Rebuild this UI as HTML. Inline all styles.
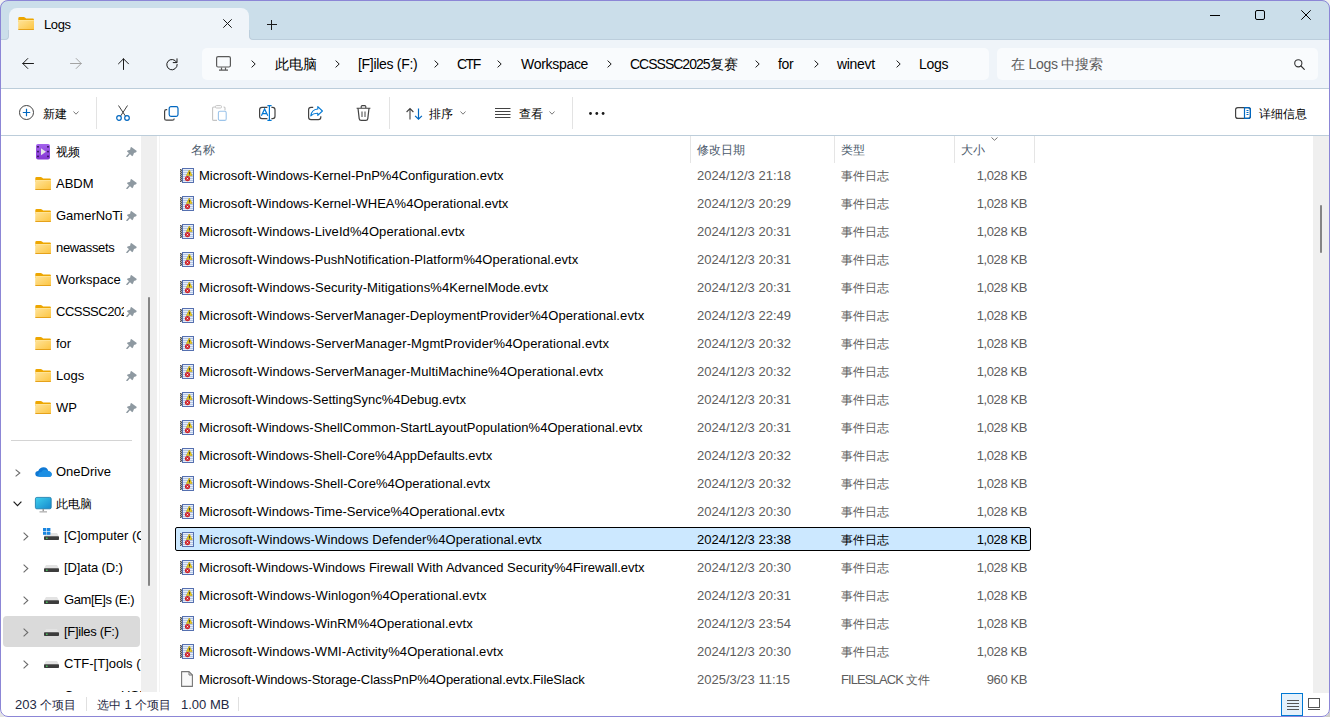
<!DOCTYPE html><html><head><meta charset="utf-8"><style>
*{box-sizing:border-box;margin:0;padding:0}
html,body{width:1330px;height:717px;overflow:hidden;background:#f1f1ef}
body{font-family:"Liberation Sans",sans-serif;font-size:13px;color:#1a1a1a;position:relative}
.a{position:absolute}
.c{font-size:12px}
.ad{font-size:14px;letter-spacing:-0.3px}
.ad .c{font-size:14px;letter-spacing:0}
.t{position:absolute;white-space:nowrap;line-height:16px;padding-top:1px}
.k{color:#000}
.g{color:#5d5d5d}
.h{color:#4b596b}
.sz{letter-spacing:-0.4px}
#win{position:absolute;left:0;top:0;width:1330px;height:717px;border-radius:8px;overflow:hidden;background:#fff}
#frame{position:absolute;left:0;top:0;width:1330px;height:717px;border:1px solid #8c86d6;border-radius:8px}
svg.i{position:absolute;overflow:visible}
</style></head><body>

<svg width="0" height="0" style="position:absolute">
<defs>
 <linearGradient id="fg" x1="0" y1="0" x2="1" y2="1">
  <stop offset="0" stop-color="#ffe49a"/><stop offset="1" stop-color="#fcc440"/>
 </linearGradient>
 <symbol id="folder" viewBox="0 0 16 13">
  <path d="M0.3 1.3 Q0.3 0 1.6 0 H5.6 Q6.5 0 7 0.6 L8.1 1.6 H14.9 Q15.9 1.6 15.9 2.6 V5 H0.3Z" fill="#eda600"/>
  <rect x="0.2" y="3.1" width="15.8" height="9.8" rx="1" fill="url(#fg)"/>
  <rect x="0.2" y="12" width="15.8" height="0.9" rx="0.45" fill="#e6a21a"/>
  <rect x="0.2" y="3.1" width="15.8" height="0.7" fill="#ffe7a0"/>
 </symbol>
 <symbol id="pin" viewBox="0 0 11 11">
  <path d="M5.3 0.9 L10.8 5.1 L10.1 6.2 L8 6.9 L7 9.5 L6.2 10.2 L0.9 5.3 L1.6 4.5 L4.1 3.7 L4.6 1.6Z" fill="#8e99a1"/>
  <path d="M3.8 7.3 L1 10.4" stroke="#8e99a1" stroke-width="1.5" stroke-linecap="round"/>
 </symbol>
 <symbol id="evt" viewBox="0 0 14 15">
  <rect x="2" y="0" width="12" height="15" fill="#5570b0"/>
  <rect x="3" y="1" width="10" height="13" fill="#e8eef8"/>
  <g fill="#b3c6e4"><rect x="3" y="2" width="10" height="1"/><rect x="3" y="4" width="10" height="1"/><rect x="3" y="6" width="10" height="1"/><rect x="3" y="8" width="10" height="1"/><rect x="3" y="10" width="10" height="1"/><rect x="3" y="12" width="10" height="1"/></g>
  <g fill="#555"><rect x="0" y="1" width="1" height="1"/><rect x="1" y="2" width="1" height="1"/><rect x="0" y="3" width="1" height="1"/><rect x="1" y="4" width="1" height="1"/><rect x="0" y="5" width="1" height="1"/><rect x="1" y="6" width="1" height="1"/><rect x="0" y="7" width="1" height="1"/><rect x="1" y="8" width="1" height="1"/><rect x="0" y="9" width="1" height="1"/><rect x="1" y="10" width="1" height="1"/><rect x="0" y="11" width="1" height="1"/><rect x="1" y="12" width="1" height="1"/><rect x="0" y="13" width="1" height="1"/></g>
  <g fill="#aaa"><rect x="1" y="1" width="1" height="1"/><rect x="0" y="2" width="1" height="1"/><rect x="1" y="3" width="1" height="1"/><rect x="0" y="4" width="1" height="1"/><rect x="1" y="5" width="1" height="1"/><rect x="0" y="6" width="1" height="1"/><rect x="1" y="7" width="1" height="1"/><rect x="0" y="8" width="1" height="1"/><rect x="1" y="9" width="1" height="1"/><rect x="0" y="10" width="1" height="1"/><rect x="1" y="11" width="1" height="1"/><rect x="0" y="12" width="1" height="1"/><rect x="1" y="13" width="1" height="1"/></g>
  <path d="M9.3 2 L12.2 7.6 H6.4Z" fill="#f0cf1a" stroke="#b89a00" stroke-width="0.6" stroke-linejoin="round"/>
  <rect x="8.9" y="3.8" width="0.9" height="2.2" fill="#222"/><rect x="8.9" y="6.4" width="0.9" height="0.8" fill="#222"/>
  <circle cx="7.5" cy="10.6" r="2.6" fill="#cc2229"/>
  <path d="M6.7 9.8 L8.3 11.4 M8.3 9.8 L6.7 11.4" stroke="#fff" stroke-width="0.8"/>
 </symbol>
 <symbol id="doc" viewBox="0 0 12 16">
  <path d="M0.6 0.6 H8 L11.4 4 V15.4 H0.6Z" fill="#f9f9f9" stroke="#777" stroke-width="1.1" stroke-linejoin="round"/>
  <path d="M8 0.6 V4 H11.4" fill="none" stroke="#777" stroke-width="1"/>
 </symbol>
 <symbol id="drive" viewBox="0 0 15 7">
  <path d="M2 0 H13 L15 3.5 H0Z" fill="#e3e3e3"/>
  <rect x="0" y="3.3" width="15" height="3.7" rx="0.8" fill="#3c3c3c"/>
  <rect x="2" y="4.6" width="1.6" height="1.2" fill="#4cd964"/>
 </symbol>
</defs></svg>

<div class="a" style="left:1318px;top:705px;width:12px;height:12px;background:#cfcfcb"></div>
<div class="a" style="left:0;top:705px;width:12px;height:12px;background:#e4e4e2"></div>
<div id="win">
<div class="a" style="left:0;top:0;width:1330px;height:40px;background:#cbdeea"></div>
<div class="a" style="left:9px;top:8px;width:240px;height:32px;background:#eff4f9;border-radius:8px 8px 0 0"></div>
<div class="a" style="left:0;top:40px;width:1330px;height:48px;background:#eff4f9"></div>
<div class="a" style="left:0;top:88px;width:1330px;height:1px;background:#bccdda"></div>
<div class="a" style="left:0;top:135px;width:1330px;height:1px;background:#bccdda"></div>
<div class="a" style="left:202px;top:48px;width:787px;height:32px;background:#f9fbfd;border-radius:5px"></div>
<div class="a" style="left:997px;top:48px;width:321px;height:32px;background:#f9fbfd;border-radius:5px"></div>
<svg class="i" style="left:18px;top:17px" width="16" height="13"><use href="#folder"/></svg>
<div class="t k" style="left:44px;top:16px;letter-spacing:-0.4px">Logs</div>
<div class="t k ad" style="left:275px;top:55px"><span class="c">此电脑</span></div>
<div class="t k ad" style="left:358px;top:55px">[F]iles (F:)</div>
<div class="t k ad" style="left:457px;top:55px"><span style="letter-spacing:-1.5px">CTF</span></div>
<div class="t k ad" style="left:521px;top:55px">Workspace</div>
<div class="t k ad" style="left:630px;top:55px"><span style="letter-spacing:-1px">CCSSSC2025</span><span class="c">复赛</span></div>
<div class="t k ad" style="left:778px;top:55px">for</div>
<div class="t k ad" style="left:837px;top:55px">winevt</div>
<div class="t k ad" style="left:919px;top:55px">Logs</div>
<div class="t g ad" style="left:1011px;top:55px"><span class="c">在</span> Logs <span class="c">中搜索</span></div>
<div class="t k" style="left:43px;top:105px"><span class="c">新建</span></div>
<div class="t k" style="left:429px;top:105px"><span class="c">排序</span></div>
<div class="t k" style="left:519px;top:105px"><span class="c">查看</span></div>
<div class="t k" style="left:1259px;top:105px"><span class="c">详细信息</span></div>
<div class="t k" style="left:56px;top:143px;width:68px;overflow:hidden"><span class="c">视频</span></div>
<svg class="i" style="left:126px;top:146px" width="11" height="11"><use href="#pin"/></svg>
<svg class="i" style="left:35px;top:177px" width="16" height="13"><use href="#folder"/></svg>
<div class="t k" style="left:56px;top:175px;width:68px;overflow:hidden">ABDM</div>
<svg class="i" style="left:126px;top:178px" width="11" height="11"><use href="#pin"/></svg>
<svg class="i" style="left:35px;top:209px" width="16" height="13"><use href="#folder"/></svg>
<div class="t k" style="left:56px;top:207px;width:68px;overflow:hidden">GamerNoTi</div>
<svg class="i" style="left:126px;top:210px" width="11" height="11"><use href="#pin"/></svg>
<svg class="i" style="left:35px;top:241px" width="16" height="13"><use href="#folder"/></svg>
<div class="t k" style="left:56px;top:239px;width:68px;overflow:hidden"><span style="letter-spacing:-0.33px">newassets</span></div>
<svg class="i" style="left:126px;top:242px" width="11" height="11"><use href="#pin"/></svg>
<svg class="i" style="left:35px;top:273px" width="16" height="13"><use href="#folder"/></svg>
<div class="t k" style="left:56px;top:271px;width:68px;overflow:hidden">Workspace</div>
<svg class="i" style="left:126px;top:274px" width="11" height="11"><use href="#pin"/></svg>
<svg class="i" style="left:35px;top:305px" width="16" height="13"><use href="#folder"/></svg>
<div class="t k" style="left:56px;top:303px;width:68px;overflow:hidden"><span style="letter-spacing:-0.5px">CCSSSC2025</span></div>
<svg class="i" style="left:126px;top:306px" width="11" height="11"><use href="#pin"/></svg>
<svg class="i" style="left:35px;top:337px" width="16" height="13"><use href="#folder"/></svg>
<div class="t k" style="left:56px;top:335px;width:68px;overflow:hidden">for</div>
<svg class="i" style="left:126px;top:338px" width="11" height="11"><use href="#pin"/></svg>
<svg class="i" style="left:35px;top:369px" width="16" height="13"><use href="#folder"/></svg>
<div class="t k" style="left:56px;top:367px;width:68px;overflow:hidden">Logs</div>
<svg class="i" style="left:126px;top:370px" width="11" height="11"><use href="#pin"/></svg>
<svg class="i" style="left:35px;top:401px" width="16" height="13"><use href="#folder"/></svg>
<div class="t k" style="left:56px;top:399px;width:68px;overflow:hidden">WP</div>
<svg class="i" style="left:126px;top:402px" width="11" height="11"><use href="#pin"/></svg>
<div class="a" style="left:11px;top:440px;width:121px;height:1px;background:#d4d4d4"></div>
<div class="a" style="left:3px;top:616px;width:137px;height:31px;background:#dadada;border-radius:4px"></div>
<div class="t k" style="left:56px;top:463px">OneDrive</div>
<div class="t k" style="left:56px;top:495px"><span class="c">此电脑</span></div>
<svg class="i" style="left:44px;top:533px" width="15" height="7"><use href="#drive"/></svg>
<div class="t k" style="left:64px;top:527px;width:77px;overflow:hidden">[C]omputer (C:)</div>
<svg class="i" style="left:44px;top:565px" width="15" height="7"><use href="#drive"/></svg>
<div class="t k" style="left:64px;top:559px;width:77px;overflow:hidden"><span style="letter-spacing:-0.1px">[D]ata (D:)</span></div>
<svg class="i" style="left:44px;top:597px" width="15" height="7"><use href="#drive"/></svg>
<div class="t k" style="left:64px;top:591px;width:77px;overflow:hidden"><span style="letter-spacing:-0.42px">Gam[E]s (E:)</span></div>
<svg class="i" style="left:44px;top:629px" width="15" height="7"><use href="#drive"/></svg>
<div class="t k" style="left:64px;top:623px;width:77px;overflow:hidden"><span style="letter-spacing:-0.32px">[F]iles (F:)</span></div>
<svg class="i" style="left:44px;top:661px" width="15" height="7"><use href="#drive"/></svg>
<div class="t k" style="left:64px;top:655px;width:77px;overflow:hidden">CTF-[T]ools (T:)</div>
<svg class="i" style="left:44px;top:693px" width="15" height="7"><use href="#drive"/></svg>
<div class="t k" style="left:64px;top:687px;width:77px;overflow:hidden">Conseror USB (G:)</div>
<div class="a" style="left:141px;top:136px;width:16px;height:556px;background:#efefef"></div>
<div class="a" style="left:148px;top:297px;width:2px;height:289px;background:#858585;border-radius:1px"></div>
<div class="t h" style="left:191px;top:141px"><span class="c">名称</span></div>
<div class="t h" style="left:697px;top:141px"><span class="c">修改日期</span></div>
<div class="t h" style="left:841px;top:141px"><span class="c">类型</span></div>
<div class="t h" style="left:961px;top:141px"><span class="c">大小</span></div>
<div class="a" style="left:690px;top:136px;width:1px;height:27px;background:#e5e5e5"></div>
<div class="a" style="left:834px;top:136px;width:1px;height:27px;background:#e5e5e5"></div>
<div class="a" style="left:954px;top:136px;width:1px;height:27px;background:#e5e5e5"></div>
<div class="a" style="left:1034px;top:136px;width:1px;height:27px;background:#e5e5e5"></div>
<div class="a" style="left:175px;top:527px;width:856px;height:24px;background:#cce8ff;border:1px solid #000;border-radius:2px"></div>
<svg class="i" style="left:180px;top:168px" width="14" height="15"><use href="#evt"/></svg>
<div class="t k" style="left:199px;top:167px;letter-spacing:0.009px">Microsoft-Windows-Kernel-PnP%4Configuration.evtx</div>
<div class="t g" style="left:697px;top:167px">2024/12/3 21:18</div>
<div class="t g" style="left:841px;top:167px"><span class="c">事件日志</span></div>
<div class="t sz g" style="right:303px;top:167px">1,028 KB</div>
<svg class="i" style="left:180px;top:196px" width="14" height="15"><use href="#evt"/></svg>
<div class="t k" style="left:199px;top:195px;letter-spacing:0.018px">Microsoft-Windows-Kernel-WHEA%4Operational.evtx</div>
<div class="t g" style="left:697px;top:195px">2024/12/3 20:29</div>
<div class="t g" style="left:841px;top:195px"><span class="c">事件日志</span></div>
<div class="t sz g" style="right:303px;top:195px">1,028 KB</div>
<svg class="i" style="left:180px;top:224px" width="14" height="15"><use href="#evt"/></svg>
<div class="t k" style="left:199px;top:223px;letter-spacing:0.088px">Microsoft-Windows-LiveId%4Operational.evtx</div>
<div class="t g" style="left:697px;top:223px">2024/12/3 20:31</div>
<div class="t g" style="left:841px;top:223px"><span class="c">事件日志</span></div>
<div class="t sz g" style="right:303px;top:223px">1,028 KB</div>
<svg class="i" style="left:180px;top:252px" width="14" height="15"><use href="#evt"/></svg>
<div class="t k" style="left:199px;top:251px;letter-spacing:0.084px">Microsoft-Windows-PushNotification-Platform%4Operational.evtx</div>
<div class="t g" style="left:697px;top:251px">2024/12/3 20:31</div>
<div class="t g" style="left:841px;top:251px"><span class="c">事件日志</span></div>
<div class="t sz g" style="right:303px;top:251px">1,028 KB</div>
<svg class="i" style="left:180px;top:280px" width="14" height="15"><use href="#evt"/></svg>
<div class="t k" style="left:199px;top:279px;letter-spacing:0.098px">Microsoft-Windows-Security-Mitigations%4KernelMode.evtx</div>
<div class="t g" style="left:697px;top:279px">2024/12/3 20:31</div>
<div class="t g" style="left:841px;top:279px"><span class="c">事件日志</span></div>
<div class="t sz g" style="right:303px;top:279px">1,028 KB</div>
<svg class="i" style="left:180px;top:308px" width="14" height="15"><use href="#evt"/></svg>
<div class="t k" style="left:199px;top:307px;letter-spacing:0.088px">Microsoft-Windows-ServerManager-DeploymentProvider%4Operational.evtx</div>
<div class="t g" style="left:697px;top:307px">2024/12/3 22:49</div>
<div class="t g" style="left:841px;top:307px"><span class="c">事件日志</span></div>
<div class="t sz g" style="right:303px;top:307px">1,028 KB</div>
<svg class="i" style="left:180px;top:336px" width="14" height="15"><use href="#evt"/></svg>
<div class="t k" style="left:199px;top:335px;letter-spacing:0.126px">Microsoft-Windows-ServerManager-MgmtProvider%4Operational.evtx</div>
<div class="t g" style="left:697px;top:335px">2024/12/3 20:32</div>
<div class="t g" style="left:841px;top:335px"><span class="c">事件日志</span></div>
<div class="t sz g" style="right:303px;top:335px">1,028 KB</div>
<svg class="i" style="left:180px;top:364px" width="14" height="15"><use href="#evt"/></svg>
<div class="t k" style="left:199px;top:363px;letter-spacing:0.102px">Microsoft-Windows-ServerManager-MultiMachine%4Operational.evtx</div>
<div class="t g" style="left:697px;top:363px">2024/12/3 20:32</div>
<div class="t g" style="left:841px;top:363px"><span class="c">事件日志</span></div>
<div class="t sz g" style="right:303px;top:363px">1,028 KB</div>
<svg class="i" style="left:180px;top:392px" width="14" height="15"><use href="#evt"/></svg>
<div class="t k" style="left:199px;top:391px;letter-spacing:-0.029px">Microsoft-Windows-SettingSync%4Debug.evtx</div>
<div class="t g" style="left:697px;top:391px">2024/12/3 20:31</div>
<div class="t g" style="left:841px;top:391px"><span class="c">事件日志</span></div>
<div class="t sz g" style="right:303px;top:391px">1,028 KB</div>
<svg class="i" style="left:180px;top:420px" width="14" height="15"><use href="#evt"/></svg>
<div class="t k" style="left:199px;top:419px;letter-spacing:0.031px">Microsoft-Windows-ShellCommon-StartLayoutPopulation%4Operational.evtx</div>
<div class="t g" style="left:697px;top:419px">2024/12/3 20:31</div>
<div class="t g" style="left:841px;top:419px"><span class="c">事件日志</span></div>
<div class="t sz g" style="right:303px;top:419px">1,028 KB</div>
<svg class="i" style="left:180px;top:448px" width="14" height="15"><use href="#evt"/></svg>
<div class="t k" style="left:199px;top:447px;letter-spacing:0.013px">Microsoft-Windows-Shell-Core%4AppDefaults.evtx</div>
<div class="t g" style="left:697px;top:447px">2024/12/3 20:32</div>
<div class="t g" style="left:841px;top:447px"><span class="c">事件日志</span></div>
<div class="t sz g" style="right:303px;top:447px">1,028 KB</div>
<svg class="i" style="left:180px;top:476px" width="14" height="15"><use href="#evt"/></svg>
<div class="t k" style="left:199px;top:475px;letter-spacing:0.051px">Microsoft-Windows-Shell-Core%4Operational.evtx</div>
<div class="t g" style="left:697px;top:475px">2024/12/3 20:32</div>
<div class="t g" style="left:841px;top:475px"><span class="c">事件日志</span></div>
<div class="t sz g" style="right:303px;top:475px">1,028 KB</div>
<svg class="i" style="left:180px;top:504px" width="14" height="15"><use href="#evt"/></svg>
<div class="t k" style="left:199px;top:503px;letter-spacing:0.043px">Microsoft-Windows-Time-Service%4Operational.evtx</div>
<div class="t g" style="left:697px;top:503px">2024/12/3 20:30</div>
<div class="t g" style="left:841px;top:503px"><span class="c">事件日志</span></div>
<div class="t sz g" style="right:303px;top:503px">1,028 KB</div>
<svg class="i" style="left:180px;top:532px" width="14" height="15"><use href="#evt"/></svg>
<div class="t k" style="left:199px;top:531px;letter-spacing:0.106px">Microsoft-Windows-Windows Defender%4Operational.evtx</div>
<div class="t k" style="left:697px;top:531px">2024/12/3 23:38</div>
<div class="t k" style="left:841px;top:531px"><span class="c">事件日志</span></div>
<div class="t sz k" style="right:303px;top:531px">1,028 KB</div>
<svg class="i" style="left:180px;top:560px" width="14" height="15"><use href="#evt"/></svg>
<div class="t k" style="left:199px;top:559px;letter-spacing:-0.022px">Microsoft-Windows-Windows Firewall With Advanced Security%4Firewall.evtx</div>
<div class="t g" style="left:697px;top:559px">2024/12/3 20:30</div>
<div class="t g" style="left:841px;top:559px"><span class="c">事件日志</span></div>
<div class="t sz g" style="right:303px;top:559px">1,028 KB</div>
<svg class="i" style="left:180px;top:588px" width="14" height="15"><use href="#evt"/></svg>
<div class="t k" style="left:199px;top:587px;letter-spacing:0.131px">Microsoft-Windows-Winlogon%4Operational.evtx</div>
<div class="t g" style="left:697px;top:587px">2024/12/3 20:31</div>
<div class="t g" style="left:841px;top:587px"><span class="c">事件日志</span></div>
<div class="t sz g" style="right:303px;top:587px">1,028 KB</div>
<svg class="i" style="left:180px;top:616px" width="14" height="15"><use href="#evt"/></svg>
<div class="t k" style="left:199px;top:615px;letter-spacing:0.088px">Microsoft-Windows-WinRM%4Operational.evtx</div>
<div class="t g" style="left:697px;top:615px">2024/12/3 23:54</div>
<div class="t g" style="left:841px;top:615px"><span class="c">事件日志</span></div>
<div class="t sz g" style="right:303px;top:615px">1,028 KB</div>
<svg class="i" style="left:180px;top:644px" width="14" height="15"><use href="#evt"/></svg>
<div class="t k" style="left:199px;top:643px;letter-spacing:0.094px">Microsoft-Windows-WMI-Activity%4Operational.evtx</div>
<div class="t g" style="left:697px;top:643px">2024/12/3 20:30</div>
<div class="t g" style="left:841px;top:643px"><span class="c">事件日志</span></div>
<div class="t sz g" style="right:303px;top:643px">1,028 KB</div>
<svg class="i" style="left:181px;top:671px" width="12" height="16"><use href="#doc"/></svg>
<div class="t k" style="left:199px;top:671px;letter-spacing:-0.083px">Microsoft-Windows-Storage-ClassPnP%4Operational.evtx.FileSlack</div>
<div class="t g" style="left:697px;top:671px">2025/3/23 11:15</div>
<div class="t g" style="left:841px;top:671px"><span style="letter-spacing:-0.9px">FILESLACK </span><span class="c">文件</span></div>
<div class="t g sz" style="right:303px;top:671px">960 KB</div>
<div class="a" style="left:1313px;top:136px;width:16px;height:557px;background:#efefef"></div>
<div class="a" style="left:159px;top:136px;width:1px;height:556px;background:#f4f4f4"></div>
<div class="a" style="left:1320px;top:205px;width:2px;height:48px;background:#858585;border-radius:1px"></div>
<div class="a" style="left:257px;top:39px;width:1073px;height:1px;background:#bccedc"></div>
<div class="a" style="left:1px;top:32px;width:8px;height:8px;background:#eff4f9"></div>
<div class="a" style="left:0px;top:30px;width:9px;height:10px;background:#cbdeea;border-radius:0 0 4px 0;border-right:1px solid #bccedc;border-bottom:1px solid #bccedc"></div>
<div class="a" style="left:249px;top:32px;width:8px;height:8px;background:#eff4f9"></div>
<div class="a" style="left:249px;top:30px;width:9px;height:10px;background:#cbdeea;border-radius:0 0 0 4px;border-left:1px solid #bccedc;border-bottom:1px solid #bccedc"></div>
<svg class="i" style="left:223px;top:19px" width="9" height="9" viewBox="0 0 9 9" ><path d="M0.3 0.3 L8.7 8.7 M8.7 0.3 L0.3 8.7" stroke="#1a1a1a" stroke-width="1"/></svg>
<svg class="i" style="left:267px;top:20px" width="10" height="10" viewBox="0 0 10 10" ><path d="M4.5 0 V10 M0 4.5 H10" stroke="#1a1a1a" stroke-width="1"/></svg>
<svg class="i" style="left:1210px;top:15px" width="10" height="1" viewBox="0 0 10 1" ><rect x="0" y="0" width="10" height="1" fill="#000"/></svg>
<svg class="i" style="left:1255px;top:10px" width="10" height="10" viewBox="0 0 10 10" ><rect x="0.5" y="0.5" width="9" height="9" rx="1.5" fill="none" stroke="#000" stroke-width="1"/></svg>
<svg class="i" style="left:1301px;top:10px" width="10" height="10" viewBox="0 0 10 10" ><path d="M0.3 0.3 L9.7 9.7 M9.7 0.3 L0.3 9.7" stroke="#000" stroke-width="1"/></svg>
<svg class="i" style="left:22px;top:57px" width="12" height="12" viewBox="0 0 12 12" ><path d="M11.5 6.5 H0.8 M5.8 1.5 L0.8 6.5 L5.8 11.5" fill="none" stroke="#1a1a1a" stroke-width="1" stroke-linecap="round" stroke-linejoin="round"/></svg>
<svg class="i" style="left:70px;top:57px" width="12" height="12" viewBox="0 0 12 12" ><path d="M0.5 6.5 H11.2 M6.2 1.5 L11.2 6.5 L6.2 11.5" fill="none" stroke="#a3a3a3" stroke-width="1" stroke-linecap="round" stroke-linejoin="round"/></svg>
<svg class="i" style="left:117px;top:58px" width="12" height="12" viewBox="0 0 12 12" ><path d="M6.5 11.5 V0.8 M1.5 5.8 L6.5 0.8 L11.5 5.8" fill="none" stroke="#1a1a1a" stroke-width="1" stroke-linecap="round" stroke-linejoin="round"/></svg>
<svg class="i" style="left:166px;top:58px" width="12" height="12" viewBox="0 0 12 12" ><path d="M10.6 4.2 A5.2 5.2 0 1 0 11.2 6.5" fill="none" stroke="#1a1a1a" stroke-width="1" stroke-linecap="round" stroke-linejoin="round"/><path d="M11 0.8 V4.6 H7.2" fill="none" stroke="#1a1a1a" stroke-width="1" stroke-linecap="round" stroke-linejoin="round"/></svg>
<svg class="i" style="left:216px;top:56px" width="15" height="15" viewBox="0 0 15 15" ><rect x="0.6" y="0.6" width="13.8" height="10.4" rx="1.5" fill="none" stroke="#5a5a5a" stroke-width="1.2"/><path d="M3 14.2 H12 M5.5 11.5 V14 M9.5 11.5 V14" stroke="#5a5a5a" stroke-width="1.2"/></svg>
<svg class="i" style="left:251px;top:60px" width="5" height="8" viewBox="0 0 5 8" ><path d="M0.6 0.6 L4.2 4 L0.6 7.4" fill="none" stroke="#1a1a1a" stroke-width="1"/></svg>
<svg class="i" style="left:335px;top:60px" width="5" height="8" viewBox="0 0 5 8" ><path d="M0.6 0.6 L4.2 4 L0.6 7.4" fill="none" stroke="#1a1a1a" stroke-width="1"/></svg>
<svg class="i" style="left:434px;top:60px" width="5" height="8" viewBox="0 0 5 8" ><path d="M0.6 0.6 L4.2 4 L0.6 7.4" fill="none" stroke="#1a1a1a" stroke-width="1"/></svg>
<svg class="i" style="left:497px;top:60px" width="5" height="8" viewBox="0 0 5 8" ><path d="M0.6 0.6 L4.2 4 L0.6 7.4" fill="none" stroke="#1a1a1a" stroke-width="1"/></svg>
<svg class="i" style="left:607px;top:60px" width="5" height="8" viewBox="0 0 5 8" ><path d="M0.6 0.6 L4.2 4 L0.6 7.4" fill="none" stroke="#1a1a1a" stroke-width="1"/></svg>
<svg class="i" style="left:755px;top:60px" width="5" height="8" viewBox="0 0 5 8" ><path d="M0.6 0.6 L4.2 4 L0.6 7.4" fill="none" stroke="#1a1a1a" stroke-width="1"/></svg>
<svg class="i" style="left:814px;top:60px" width="5" height="8" viewBox="0 0 5 8" ><path d="M0.6 0.6 L4.2 4 L0.6 7.4" fill="none" stroke="#1a1a1a" stroke-width="1"/></svg>
<svg class="i" style="left:896px;top:60px" width="5" height="8" viewBox="0 0 5 8" ><path d="M0.6 0.6 L4.2 4 L0.6 7.4" fill="none" stroke="#1a1a1a" stroke-width="1"/></svg>
<svg class="i" style="left:1294px;top:59px" width="11" height="11" viewBox="0 0 11 11" ><circle cx="4.3" cy="4.3" r="3.6" fill="none" stroke="#333" stroke-width="1.1"/><path d="M7 7 L10.3 10.3" stroke="#333" stroke-width="1.2" stroke-linecap="round"/></svg>
<svg class="i" style="left:19px;top:105px" width="15" height="15" viewBox="0 0 15 15" ><circle cx="7.5" cy="7.5" r="7" fill="none" stroke="#424242" stroke-width="1"/><path d="M7.5 3.8 V11.2 M3.8 7.5 H11.2" stroke="#0067c0" stroke-width="1.2"/></svg>
<svg class="i" style="left:73px;top:111px" width="6" height="4" viewBox="0 0 6 4" ><path d="M0.5 0.5 L3 3.2 L5.5 0.5" fill="none" stroke="#7a7a7a" stroke-width="1"/></svg>
<svg class="i" style="left:460px;top:111px" width="6" height="4" viewBox="0 0 6 4" ><path d="M0.5 0.5 L3 3.2 L5.5 0.5" fill="none" stroke="#7a7a7a" stroke-width="1"/></svg>
<svg class="i" style="left:549px;top:111px" width="6" height="4" viewBox="0 0 6 4" ><path d="M0.5 0.5 L3 3.2 L5.5 0.5" fill="none" stroke="#7a7a7a" stroke-width="1"/></svg>
<div class="a" style="left:96px;top:97px;width:1px;height:32px;background:#e3e3e3"></div>
<div class="a" style="left:389px;top:97px;width:1px;height:32px;background:#e3e3e3"></div>
<div class="a" style="left:572px;top:97px;width:1px;height:32px;background:#e3e3e3"></div>
<svg class="i" style="left:116px;top:105px" width="14" height="16" viewBox="0 0 14 16" ><path d="M2.5 0.5 L9.5 11.2 M11.5 0.5 L4.5 11.2" stroke="#424242" stroke-width="1"/><circle cx="3" cy="13" r="2.3" fill="none" stroke="#0067c0" stroke-width="1.2"/><circle cx="11" cy="13" r="2.3" fill="none" stroke="#0067c0" stroke-width="1.2"/></svg>
<svg class="i" style="left:164px;top:105.5px" width="15" height="15" viewBox="0 0 15 15" ><rect x="5.2" y="0.6" width="8.8" height="9.8" rx="1.8" fill="none" stroke="#0067c0" stroke-width="1.2"/><path d="M3.2 3.6 H2.4 Q0.6 3.6 0.6 5.4 V12.4 Q0.6 14.2 2.4 14.2 H8.4 Q10.2 14.2 10.2 12.4" fill="none" stroke="#424242" stroke-width="1.2"/></svg>
<svg class="i" style="left:212px;top:105px" width="15" height="16" viewBox="0 0 15 16" ><path d="M3.5 2 H1.8 Q0.6 2 0.6 3.2 V14.4 Q0.6 15.4 1.8 15.4 H5" fill="none" stroke="#c4c4c4" stroke-width="1.1"/><rect x="3.5" y="0.6" width="6" height="2.4" rx="1" fill="none" stroke="#c4c4c4" stroke-width="1"/><path d="M11.5 2 H12 Q13 2 13 3 V5.5" fill="none" stroke="#c4c4c4" stroke-width="1.1"/><rect x="6.4" y="6.2" width="7.8" height="9.2" rx="1.5" fill="none" stroke="#9cc4ea" stroke-width="1.1"/></svg>
<svg class="i" style="left:259px;top:105px" width="17" height="16" viewBox="0 0 17 16" ><path d="M8.4 2.4 H3 Q0.6 2.4 0.6 4.8 V11.2 Q0.6 13.6 3 13.6 H8.4 M12.4 2.4 H13.6 Q16 2.4 16 4.8 V11.2 Q16 13.6 13.6 13.6 H12.4" fill="none" stroke="#424242" stroke-width="1.2"/><path d="M10.4 0.4 V15.6 M8.4 0.6 H12.6 M8.4 15.4 H12.6" stroke="#0078d4" stroke-width="1.2"/><path d="M2.4 10.8 L5.6 4 L8.8 10.8 M3.5 8.6 H7.7" fill="none" stroke="#0078d4" stroke-width="1.2"/></svg>
<svg class="i" style="left:308px;top:106px" width="15" height="15" viewBox="0 0 15 15" ><path d="M5.2 1.4 H3 Q0.6 1.4 0.6 3.8 V11.2 Q0.6 13.6 3 13.6 H10.4 Q12.8 13.6 12.8 11.2 V10.2" fill="none" stroke="#424242" stroke-width="1.2"/><path d="M9.8 0.6 L14.4 5 L9.8 9.4 V7.2 Q5.4 7 2.8 9.8 Q3.6 3.6 9.8 3Z" fill="none" stroke="#0078d4" stroke-width="1.1" stroke-linejoin="round"/></svg>
<svg class="i" style="left:356px;top:105px" width="15" height="16" viewBox="0 0 15 16" ><path d="M0.6 3.2 H14.4 M5.2 3 V1.6 Q5.2 0.6 6.2 0.6 H8.8 Q9.8 0.6 9.8 1.6 V3" fill="none" stroke="#424242" stroke-width="1.1"/><path d="M2 3.2 L3.2 13.6 Q3.4 15.4 5.2 15.4 H9.8 Q11.6 15.4 11.8 13.6 L13 3.2" fill="none" stroke="#424242" stroke-width="1.2"/><path d="M6 6.5 V12 M9 6.5 V12" stroke="#424242" stroke-width="1"/></svg>
<svg class="i" style="left:406px;top:107.5px" width="17" height="12" viewBox="0 0 17 12" ><path d="M4 11.5 V0.6 M0.6 4 L4 0.6 L7.4 4" fill="none" stroke="#424242" stroke-width="1.1"/><path d="M12.5 0.5 V11.2 M9.1 7.8 L12.5 11.2 L15.9 7.8" fill="none" stroke="#0067c0" stroke-width="1.2"/></svg>
<svg class="i" style="left:495px;top:108px" width="16" height="10" viewBox="0 0 16 10" ><path d="M0 0.5 H15.5 M0 3.5 H15.5 M0 6.5 H15.5 M0 9.5 H15.5" stroke="#424242" stroke-width="1"/></svg>
<svg class="i" style="left:589px;top:112px" width="16" height="3" viewBox="0 0 16 3" ><circle cx="1.5" cy="1.5" r="1.4" fill="#1a1a1a"/><circle cx="7.8" cy="1.5" r="1.4" fill="#1a1a1a"/><circle cx="14.1" cy="1.5" r="1.4" fill="#1a1a1a"/></svg>
<svg class="i" style="left:1235px;top:107px" width="16" height="12" viewBox="0 0 16 12" ><rect x="0.6" y="0.6" width="14.8" height="10.8" rx="2.2" fill="none" stroke="#424242" stroke-width="1.2"/><path d="M9.5 0.6 H13.2 Q15.4 0.6 15.4 2.8 V9.2 Q15.4 11.4 13.2 11.4 H9.5Z" fill="none" stroke="#0067c0" stroke-width="1.2"/><path d="M11.5 3.5 H13.5 M11.5 5.5 H13.5 M11.5 7.5 H13.5" stroke="#0067c0" stroke-width="1"/></svg>
<svg class="i" style="left:991px;top:137px" width="7" height="4" viewBox="0 0 7 4" ><path d="M0.5 0.5 L3.5 3.3 L6.5 0.5" fill="none" stroke="#777" stroke-width="1"/></svg>
<svg class="i" style="left:36px;top:144px" width="14" height="16" viewBox="0 0 14 16" ><defs><linearGradient id="vg" x1="0" y1="0" x2="0" y2="1"><stop offset="0" stop-color="#a463ec"/><stop offset="1" stop-color="#8436d2"/></linearGradient></defs><rect x="0" y="0" width="14" height="15.5" rx="2" fill="url(#vg)"/><g fill="#2d1052"><rect x="1.2" y="2" width="1.6" height="1.6"/><rect x="1.2" y="6.8" width="1.6" height="1.6"/><rect x="1.2" y="11.6" width="1.6" height="1.6"/><rect x="11.2" y="2" width="1.6" height="1.6"/><rect x="11.2" y="6.8" width="1.6" height="1.6"/><rect x="11.2" y="11.6" width="1.6" height="1.6"/></g><path d="M5 4.2 L10 7.7 L5 11.2Z" fill="#e6e6e6"/></svg>
<svg class="i" style="left:35px;top:467px" width="17" height="10" viewBox="0 0 17 10" ><path d="M4 9.8 Q0.2 9.8 0.3 6.6 Q0.5 4 3.2 3.9 Q4.8 0.3 8.6 0.3 Q12.4 0.5 13.3 4.2 Q16.8 4.6 16.7 7.4 Q16.6 9.8 13.8 9.8Z" fill="#0f78d4"/><path d="M5 9.8 Q3 9.6 3.4 7 Q4 5 6.4 5 Q8 2 11 3 Q14 4 13.3 4.2 Q16.8 4.6 16.7 7.4 Q16.6 9.8 13.8 9.8Z" fill="#1c8fe3"/></svg>
<svg class="i" style="left:35px;top:497px" width="17" height="16" viewBox="0 0 17 16" ><defs><linearGradient id="mg" x1="0" y1="0" x2="1" y2="1"><stop offset="0" stop-color="#3fd0ee"/><stop offset="1" stop-color="#1688cc"/></linearGradient></defs><rect x="0.4" y="0.4" width="15.8" height="11.4" rx="1.4" fill="url(#mg)" stroke="#1576a8" stroke-width="0.8"/><rect x="7.5" y="12" width="1.5" height="2.4" fill="#9a9a9a"/><rect x="4.5" y="14.2" width="7.5" height="1.3" fill="#b0b0b0"/></svg>
<svg class="i" style="left:15px;top:469px" width="6" height="8" viewBox="0 0 6 8" ><path d="M0.6 0.6 L4.8 4 L0.6 7.4" fill="none" stroke="#6b6b6b" stroke-width="1.1"/></svg>
<svg class="i" style="left:13px;top:501px" width="9" height="6" viewBox="0 0 9 6" ><path d="M0.6 0.6 L4.5 4.6 L8.4 0.6" fill="none" stroke="#1a1a1a" stroke-width="1.2"/></svg>
<svg class="i" style="left:23px;top:532px" width="6" height="9" viewBox="0 0 6 9" ><path d="M0.6 0.6 L4.8 4.5 L0.6 8.4" fill="none" stroke="#6b6b6b" stroke-width="1.1"/></svg>
<svg class="i" style="left:23px;top:564px" width="6" height="9" viewBox="0 0 6 9" ><path d="M0.6 0.6 L4.8 4.5 L0.6 8.4" fill="none" stroke="#6b6b6b" stroke-width="1.1"/></svg>
<svg class="i" style="left:23px;top:596px" width="6" height="9" viewBox="0 0 6 9" ><path d="M0.6 0.6 L4.8 4.5 L0.6 8.4" fill="none" stroke="#6b6b6b" stroke-width="1.1"/></svg>
<svg class="i" style="left:23px;top:628px" width="6" height="9" viewBox="0 0 6 9" ><path d="M0.6 0.6 L4.8 4.5 L0.6 8.4" fill="none" stroke="#6b6b6b" stroke-width="1.1"/></svg>
<svg class="i" style="left:23px;top:660px" width="6" height="9" viewBox="0 0 6 9" ><path d="M0.6 0.6 L4.8 4.5 L0.6 8.4" fill="none" stroke="#6b6b6b" stroke-width="1.1"/></svg>
<svg class="i" style="left:23px;top:692px" width="6" height="9" viewBox="0 0 6 9" ><path d="M0.6 0.6 L4.8 4.5 L0.6 8.4" fill="none" stroke="#6b6b6b" stroke-width="1.1"/></svg>
<svg class="i" style="left:43px;top:528px" width="8" height="7" viewBox="0 0 8 7" ><rect x="0" y="0" width="3.4" height="3.1" fill="#1a86e0"/><rect x="4" y="0" width="3.4" height="3.1" fill="#1a86e0"/><rect x="0" y="3.7" width="3.4" height="3.1" fill="#1a86e0"/><rect x="4" y="3.7" width="3.4" height="3.1" fill="#1a86e0"/></svg>
<div class="a" style="left:0;top:692px;width:1313px;height:25px;background:#fff"></div>
<div class="t" style="left:15px;top:696px;color:#1f2a44">203 <span class="c">个项目</span></div>
<div class="a" style="left:86px;top:697px;width:1px;height:14px;background:#e0e0e0"></div>
<div class="t" style="left:97px;top:696px;color:#1f2a44"><span class="c">选中</span> 1 <span class="c">个项目</span></div>
<div class="t" style="left:181px;top:696px;color:#1f2a44">1.00 MB</div>
<div class="a" style="left:238px;top:697px;width:1px;height:14px;background:#e0e0e0"></div>
<div class="a" style="left:1281px;top:693px;width:22px;height:23px;background:#e5f1fb;border:1px solid #0078d4"></div>
<svg class="i" style="left:1287px;top:700px" width="12" height="10" viewBox="0 0 12 10" ><path d="M0 0.5 H12 M0 3.5 H12 M0 6.5 H12 M0 9.5 H12" stroke="#555" stroke-width="1"/></svg>
<svg class="i" style="left:1308px;top:698px" width="12" height="12" viewBox="0 0 12 12" ><rect x="0.5" y="0.5" width="11" height="9" fill="none" stroke="#555" stroke-width="1"/><path d="M0 11.5 H12" stroke="#555" stroke-width="1"/></svg>
</div><div id="frame"></div></body></html>
